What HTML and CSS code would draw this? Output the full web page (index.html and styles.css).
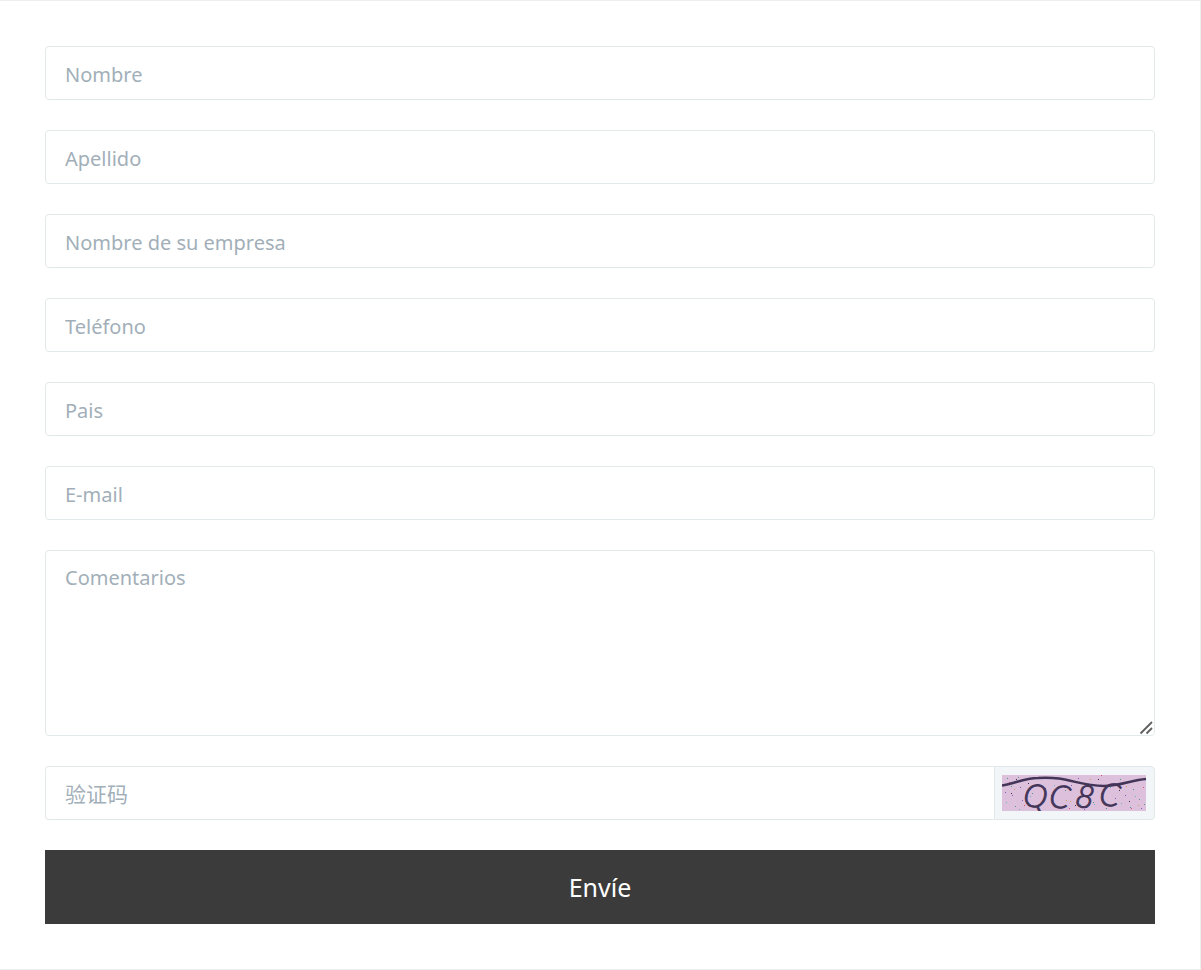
FILE: index.html
```
<!DOCTYPE html>
<html lang="es">
<head>
  <meta charset="UTF-8">
  <meta name="viewport" content="width=device-width, initial-scale=1.0">
  <title>Contacto</title>
  <link rel="stylesheet" href="styles.css">
</head>
<body>
  <form class="contact-form">
    <input type="text" class="field" name="nombre" placeholder="Nombre" aria-label="Nombre">
    <input type="text" class="field" name="apellido" placeholder="Apellido" aria-label="Apellido">
    <input type="text" class="field" name="empresa" placeholder="Nombre de su empresa" aria-label="Nombre de su empresa">
    <input type="tel" class="field" name="telefono" placeholder="Teléfono" aria-label="Teléfono">
    <input type="text" class="field" name="pais" placeholder="Pais" aria-label="Pais">
    <input type="email" class="field" name="email" placeholder="E-mail" aria-label="E-mail">
    <textarea class="field message" name="comentarios" placeholder="Comentarios" aria-label="Comentarios"></textarea>

    <div class="captcha">
      <input type="text" class="field captcha-input" name="captcha" placeholder="验证码" aria-label="验证码">
      <div class="captcha-addon">
        <svg class="captcha-image" viewBox="0 0 144 36">
          <rect width="144" height="36" fill="#dcc0dc"/>
          <g fill="none" stroke-width="1">
            <path stroke="#4a9a80" d="M5 3.500h1M16 2.500h1M9 11.500h1M30 18.500h1M13 31.500h1M48 3.500h1M63 15.500h1M91 27.500h1M104 33.500h1M118 4.500h1M128 32.500h1M137 24.500h1M142 29.500h1M131 14.500h1"/>
            <path stroke="#7b62c4" d="M3 17.500h1M10 20.500h1M20 25.500h1M18 12.500h1M54 31.500h1M69 10.500h1M76 3.500h1M82 34.500h1M99 18.500h1M113 23.500h1M123 20.500h1M134 5.500h1M139 33.500h1"/>
            <path stroke="#43334f" d="M9 18.500h1M14 4.500h1M26 8.500h1M49 20.500h1M73 30.500h1M96 4.500h1M117 15.500h1M127 26.500h1"/>
            <path stroke="#e05068" d="M7 7.500h1M22 30.500h1M43 13.500h1M67 33.500h1M99 .500h1M90 17.500h1M112 9.500h1M129 33.500h1M141 12.500h1"/>
            <path stroke="#62b8bd" d="M4 27.500h1M17 34.500h1M28 21.500h1M52 10.500h1M78 29.500h1M92 29.500h1M108 12.500h1M119 28.500h1M133 21.500h1"/>
            <path stroke="#d0a050" d="M12 14.500h1M36 31.500h1M64 25.500h1M68 26.500h1M88 4.500h1M102 14.500h1M124 11.500h1M136 30.500h1"/>
          </g>
          <path d="M0 10.500C12 9 22 3 36 3C66 1 76 11 102 11C118 11 130 5 144 4" fill="none" stroke="#433558" stroke-width="2.500"/>
          <text class="captcha-text" x="20 46 72 96" y="30 31 31 29" rotate="10">QC8C</text>
        </svg>
      </div>
    </div>

    <button type="submit" class="submit">Envíe</button>
  </form>
</body>
</html>
```
FILE: styles.css
```
* {
  box-sizing: border-box;
}

body {
  margin: 0;
  background-color: #fff;
  font-family: "Noto Sans", "Noto Sans CJK SC", sans-serif;
}

.contact-form {
  display: flex;
  flex-direction: column;
  gap: 30px;
  padding: 45px;
  border: 1px solid #eee;
  border-left: 0;
}

.field {
  display: block;
  width: 100%;
  height: 54px;
  padding: 12px 19px 10px;
  border: 1px solid #e3e9ea;
  border-radius: 4px;
  background-color: #fff;
  color: #3a3a3a;
  font-family: inherit;
  font-size: 20px;
  line-height: 30px;
}

.field::placeholder {
  color: #a2afb9;
  opacity: 1;
}

.field:focus {
  outline: none;
  border-color: #a2afb9;
}

.message {
  height: 186px;
  resize: vertical;
}

.message::-webkit-resizer {
  background: url("data:image/svg+xml;charset=UTF-8,%3csvg xmlns='http://www.w3.org/2000/svg' width='15' height='15' viewBox='0 0 15 15'%3e%3cpath d='M1.500 13.500L13 2M7.500 13.500L13 8' fill='none' stroke='%23606060' stroke-width='1.800'/%3e%3c/svg%3e") no-repeat right bottom;
}

/* Captcha */
.captcha {
  display: flex;
}

.captcha-input {
  flex: 1;
  min-width: 0;
  border-right: 0;
  border-radius: 4px 0 0 4px;
  font-size: 21px;
}

.captcha-addon {
  display: flex;
  align-items: center;
  padding: 0 8px 0 7px;
  border: 1px solid #e3e9ea;
  border-radius: 0 4px 4px 0;
  background-color: #f2f6f9;
}

.captcha-image {
  display: block;
  width: 144px;
  height: 36px;
}

.captcha-text {
  fill: #433558;
  stroke: #433558;
  stroke-width: 1px;
  font-family: Lato, sans-serif;
  font-size: 32px;
  font-style: italic;
  font-weight: 300;
}

.submit {
  height: 74px;
  padding: 0 20px;
  border: 0;
  background-color: #3b3b3b;
  color: #fff;
  font-family: inherit;
  font-size: 25px;
  cursor: pointer;
}
```
